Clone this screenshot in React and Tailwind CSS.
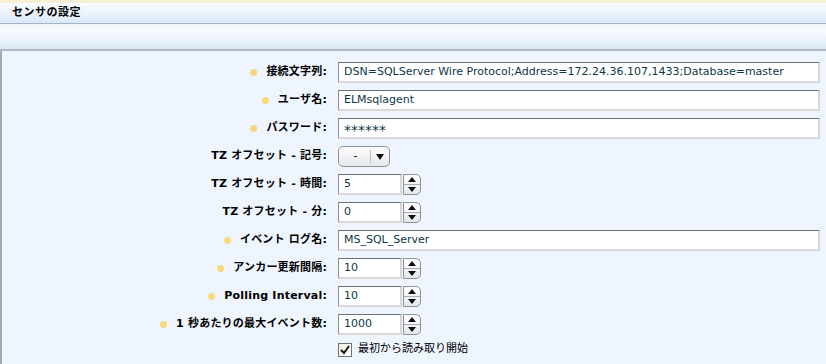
import React from 'react';

const font = { fontFamily: '"DejaVu Sans", "Noto Sans CJK JP", sans-serif' };

const Bullet = () => (
  <span className="inline-block w-[7px] h-[7px] rounded-full bg-[#f7d97c] mr-[9px] shrink-0" />
);

const Label = ({ text, bullet }) => (
  <div className="w-[336px] shrink-0 flex items-center justify-end pr-[11px] text-[11px] font-bold text-black tracking-[0.2px]">
    {bullet && <Bullet />}
    <span>{text}</span>
  </div>
);

const TextBox = ({ value, className = 'flex-1', big }) => (
  <div
    className={`${className} h-[21px] bg-white border-t border-l border-t-[#6b7176] border-l-[#8a8f94] border-r-2 border-b-2 border-r-[#d6d6d6] border-b-[#d9d9d9] flex items-center pl-[5px] ${big ? 'text-[14px] pt-[4px]' : 'text-[11px]'} text-[#0d3845] overflow-hidden whitespace-nowrap`}
  >
    {value}
  </div>
);

const Spinner = () => (
  <div className="w-[18px] h-[21px] ml-[1px] flex flex-col border border-[#8d9399] rounded-r-[5px] overflow-hidden bg-gradient-to-b from-white to-[#e4e6e8]">
    <div className="flex-1 flex items-center justify-center border-b border-[#a9aeb3]">
      <svg width="8" height="5" viewBox="0 0 8 5"><path d="M4 0 L8 5 L0 5 Z" fill="#111" /></svg>
    </div>
    <div className="flex-1 flex items-center justify-center">
      <svg width="8" height="5" viewBox="0 0 8 5"><path d="M0 0 L8 0 L4 5 Z" fill="#111" /></svg>
    </div>
  </div>
);

const NumberBox = ({ value }) => (
  <div className="flex items-center">
    <TextBox value={value} className="w-[64px]" />
    <Spinner />
  </div>
);

const SelectBox = () => (
  <div className="w-[52px] h-[21px] border border-[#8f9398] rounded-[5px] bg-gradient-to-b from-white to-[#e6e7e9] flex items-center text-[11px] text-black">
    <span className="w-[31px] text-center pl-[2px]">-</span>
    <span className="w-px h-[13px] bg-[#b8bcc0]" />
    <span className="flex-1 flex justify-center">
      <svg width="8" height="6" viewBox="0 0 8 6"><path d="M0 0 L8 0 L4 6 Z" fill="#111" /></svg>
    </span>
  </div>
);

const rows = [
  { label: '接続文字列:', bullet: true, el: <TextBox value="DSN=SQLServer Wire Protocol;Address=172.24.36.107,1433;Database=master" /> },
  { label: 'ユーザ名:', bullet: true, el: <TextBox value="ELMsqlagent" /> },
  { label: 'パスワード:', bullet: true, el: <TextBox value="******" big /> },
  { label: 'TZ オフセット - 記号:', el: <SelectBox /> },
  { label: 'TZ オフセット - 時間:', el: <NumberBox value="5" /> },
  { label: 'TZ オフセット - 分:', el: <NumberBox value="0" /> },
  { label: 'イベント ログ名:', bullet: true, el: <TextBox value="MS_SQL_Server" /> },
  { label: 'アンカー更新間隔:', bullet: true, el: <NumberBox value="10" /> },
  { label: 'Polling Interval:', bullet: true, el: <NumberBox value="10" /> },
  { label: '1 秒あたりの最大イベント数:', bullet: true, el: <NumberBox value="1000" /> },
];

export default function App() {
  return (
    <div className="w-[826px] h-[364px] overflow-hidden flex flex-col bg-[#eef5ff]" style={font}>
      <div className="h-[3px] shrink-0 bg-[#f8f0d6]" />
      <div className="h-[21px] shrink-0 bg-gradient-to-b from-[#fbfdff] to-[#dbe8f7] border-b border-[#a6b3c2] flex items-center pl-[12px] text-[11px] font-bold text-black tracking-[0.5px]">
        センサの設定
      </div>
      <div className="h-[5px] shrink-0 bg-[#f3f7fc]" />
      <div className="h-[22px] shrink-0 bg-gradient-to-b from-[#fbfdff] to-[#dbe8f7] border-b-2 border-[#b1b8c0] rounded-tl-[3px]" />
      <div className="flex-1 border-l-2 border-[#a2a8ae] pt-[11px] pr-[6px] flex flex-col gap-[7px]">
        {rows.map((r) => (
          <div key={r.label} className="flex items-center h-[21px]">
            <Label text={r.label} bullet={r.bullet} />
            {r.el}
          </div>
        ))}
        <div className="flex items-center h-[15px]">
          <div className="w-[336px] shrink-0" />
          <div className="w-[14px] h-[14px] border border-[#6f7478] bg-gradient-to-br from-[#f2eee2] to-white flex items-center justify-center">
            <svg width="10" height="10" viewBox="0 0 10 10">
              <path d="M1 5 L4 8 L9 1" stroke="#111" strokeWidth="2" fill="none" />
            </svg>
          </div>
          <span className="ml-[6px] text-[11px] text-black">最初から読み取り開始</span>
        </div>
      </div>
    </div>
  );
}
